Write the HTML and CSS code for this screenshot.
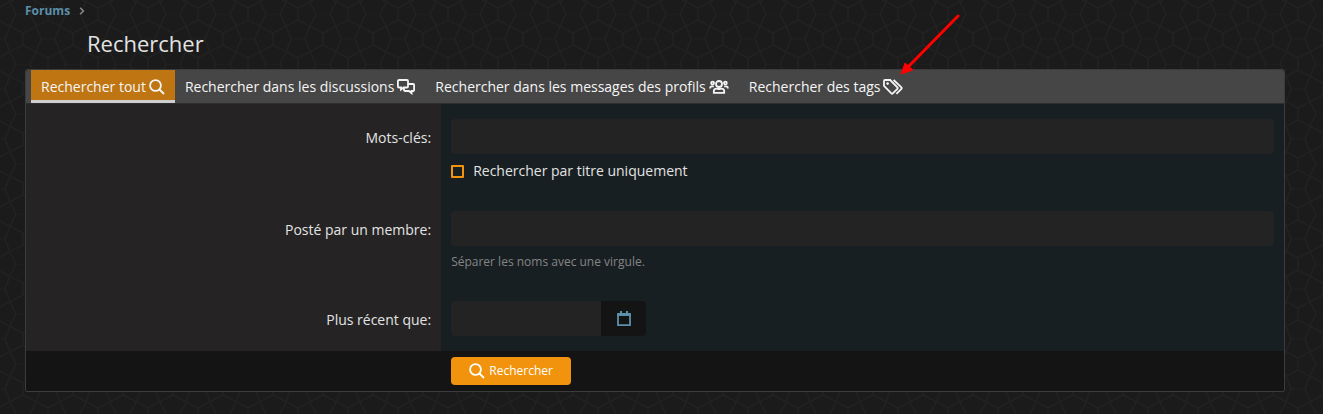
FILE: index.html
```html
<!DOCTYPE html>
<html lang="fr">
<head>
    <meta charset="UTF-8">
    <meta name="viewport" content="width=device-width, initial-scale=1.0">
    <title>Rechercher</title>
    <link rel="stylesheet" href="styles.css">
</head>
<body>
    <div class="page">
        <nav class="breadcrumbs">
            <a href="#">Forums</a>
            <svg class="chevron" viewBox="0 0 6 8" aria-hidden="true"><path d="M1.2 0.8 4.4 4 1.2 7.2"/></svg>
        </nav>

        <h1>Rechercher</h1>

        <form class="block" action="#">
            <nav class="tabs">
                <a class="tab tab-active" href="#">Rechercher tout
                    <svg class="icon" viewBox="0 0 16 16" aria-hidden="true"><circle cx="6.5" cy="6.5" r="5.4"/><path d="M10.5 10.5 15 15"/></svg>
                </a>
                <a class="tab" href="#">Rechercher dans les discussions
                    <svg class="icon icon-wide" viewBox="0 0 18 16" aria-hidden="true"><path d="M1.9 1H10a1 1 0 0 1 1 1V7.5a1 1 0 0 1-1 1H6.5L4 10.6V8.5H1.9a1 1 0 0 1-1-1V2a1 1 0 0 1 1-1Z"/><path d="M11 5H16.1a1 1 0 0 1 1 1V11a1 1 0 0 1-1 1H14.6V14.2L12 12H8a1 1 0 0 1-1-1V8.5"/></svg>
                </a>
                <a class="tab" href="#">Rechercher dans les messages des profils
                    <svg class="icon icon-group" viewBox="0 0 20 16" aria-hidden="true"><circle cx="10" cy="5" r="3"/><circle cx="3.6" cy="4" r="1.4"/><circle cx="16.4" cy="4" r="1.4"/><path d="M4.8 13.8V12.2C4.8 10.6 6 9.6 7.5 9.6 8.6 9.6 9 10 10 10S11.4 9.6 12.5 9.6C14 9.6 15.2 10.6 15.2 12.2V13.8Z"/><path d="M1.2 9.6V9C1.2 7.8 1.8 7.4 2.8 7.4H4.8M18.8 9.6V9C18.8 7.8 18.2 7.4 17.2 7.4H15.2"/></svg>
                </a>
                <a class="tab" href="#">Rechercher des tags
                    <svg class="icon icon-group" viewBox="0 0 20 16" aria-hidden="true"><path d="M1 2V7L8.4 14.4a1 1 0 0 0 1.4 0L14.4 9.8a1 1 0 0 0 0-1.4L7.2 1H2a1 1 0 0 0-1 1Z"/><path d="M10.6 1 18.4 8.4a1 1 0 0 1 0 1.4L13.4 14.8"/><circle class="dot" cx="4.6" cy="4.6" r="1.3"/></svg>
                </a>
            </nav>

            <div class="row">
                <div class="row-label"><label for="keywords">Mots-clés:</label></div>
                <div class="row-field">
                    <input class="input" type="text" id="keywords">
                    <label class="check"><input type="checkbox">Rechercher par titre uniquement</label>
                </div>
            </div>

            <div class="row">
                <div class="row-label"><label for="member">Posté par un membre:</label></div>
                <div class="row-field">
                    <input class="input" type="text" id="member">
                    <p class="hint">Séparer les noms avec une virgule.</p>
                </div>
            </div>

            <div class="row">
                <div class="row-label"><label for="newer">Plus récent que:</label></div>
                <div class="row-field">
                    <div class="date">
                        <input class="input" type="text" id="newer">
                        <button class="date-button" type="button" aria-label="Calendrier">
                            <svg viewBox="0 0 14 16" aria-hidden="true"><path class="line" d="M1 3.5H13V14.2H1Z"/><path class="fill" d="M0 3a1 1 0 0 1 1-1H3V0H5V2H9V0H11V2H13a1 1 0 0 1 1 1V5H0Z"/></svg>
                        </button>
                    </div>
                </div>
            </div>

            <div class="footer">
                <button class="submit" type="submit">
                    <svg class="icon" viewBox="0 0 16 16" aria-hidden="true"><circle cx="6.5" cy="6.5" r="5.4"/><path d="M10.5 10.5 15 15"/></svg>
                    Rechercher
                </button>
            </div>
        </form>

        <!-- Arrow pointing at the tags tab -->
        <svg class="arrow" viewBox="0 0 60 62" aria-hidden="true"><path class="shaft" d="M58 2 9 52"/><path class="head" d="M1 60 5 49 13 56Z"/></svg>
    </div>
</body>
</html>
```
FILE: styles.css
```css
:root {
    --text-color: #e3e3e3;
    --link-color: #5c8fa9;
    --accent-color: #f2930d;
    --border-color: #3c3c3c;
    --input-color: #232323;
}

* {
    box-sizing: border-box;
}

body {
    margin: 0;
    font-family: 'Segoe UI', 'Open Sans', 'Noto Sans', sans-serif;
    font-size: 14px;
    line-height: 20px;
    color: var(--text-color);
    background: #1b1b1b url("data:image/svg+xml,%3Csvg xmlns='http://www.w3.org/2000/svg' width='50' height='50'%3E%3Cpath fill='none' stroke='%23222222' stroke-width='1.2' d='M0 0V6L25 19L50 6V0M0 50V44L25 31L50 44V50M25 19V31M18 0H32M0 25H7M43 25H50M18 0L12 12L7 25L12 38L18 50M32 0L38 12L43 25L38 38L32 50'/%3E%3C/svg%3E") -2px 14px;
}

.page {
    position: relative;
    padding: 0 38px 20px 25px;
}

/* Breadcrumbs and title */
.breadcrumbs {
    display: flex;
    align-items: center;
    gap: 9px;
    padding-top: 1px;
    font-size: 12px;
    font-weight: bold;
}

.breadcrumbs a {
    color: var(--link-color);
    text-decoration: none;
}

.chevron {
    width: 6px;
    height: 8px;
    fill: none;
    stroke: #8c8c8c;
    stroke-width: 1.5;
}

h1 {
    margin: 6px 0 9px;
    padding-left: 62px;
    font-size: 22px;
    font-weight: normal;
    line-height: 33px;
}

/* Search block */
.block {
    border: 1px solid var(--border-color);
    border-radius: 2px;
    background: #141414;
}

.tabs {
    display: flex;
    padding: 0 5px;
    border-bottom: 1px solid #2e2e2e;
    border-radius: 2px 2px 0 0;
    background: #464646;
}

.tab {
    display: flex;
    align-items: center;
    gap: 3px;
    height: 33px;
    padding: 3px 10px 0;
    border-bottom: 3px solid transparent;
    color: #f5f5f5;
    text-decoration: none;
    white-space: nowrap;
}

.tab-active {
    border-bottom-color: #cfcfcf;
    background: #be7512;
}

.icon {
    width: 16px;
    height: 16px;
    flex: none;
    fill: none;
    stroke: currentColor;
    stroke-width: 1.8;
}

.icon-wide {
    width: 18px;
}

.icon-group {
    width: 20px;
}

.dot {
    fill: currentColor;
    stroke: none;
}

/* Form rows */
.row {
    display: flex;
    background: #181f22;
}

.row-label {
    width: 33%;
    padding: 24px 10px 10px;
    background: #252323;
    text-align: right;
}

.row-field {
    flex: 1;
    padding: 15px 10px;
}

.input {
    display: block;
    width: 100%;
    height: 35px;
    padding: 5px;
    border: none;
    border-radius: 4px;
    background: var(--input-color);
    color: var(--text-color);
    font: inherit;
}

.check {
    display: flex;
    align-items: center;
    gap: 9px;
    padding-top: 7px;
}

.check input {
    width: 13px;
    height: 13px;
    margin: 0;
    border: 2px solid var(--accent-color);
    border-radius: 1px;
    appearance: none;
}

.check input:checked {
    background: var(--accent-color);
}

.hint {
    margin: 7px 0 0;
    color: #858585;
    font-size: 12px;
    line-height: 18px;
}

.date {
    display: flex;
    width: 195px;
}

.date .input {
    flex: 1;
    min-width: 0;
    border-radius: 4px 0 0 4px;
}

.date-button {
    display: flex;
    align-items: center;
    justify-content: center;
    width: 45px;
    padding: 0;
    border: none;
    border-radius: 0 4px 4px 0;
    background: #141414;
    color: var(--link-color);
}

.date-button svg {
    width: 14px;
    height: 16px;
}

.date-button .line {
    fill: none;
    stroke: currentColor;
    stroke-width: 1.8;
}

.date-button .fill {
    fill: currentColor;
}

/* Submit */
.footer {
    padding: 6px 10px 6px calc(33% + 10px);
}

.submit {
    display: flex;
    align-items: center;
    justify-content: center;
    gap: 4px;
    width: 120px;
    height: 28px;
    padding: 0;
    border: none;
    border-radius: 4px;
    background: var(--accent-color);
    color: #fff;
    font: inherit;
    font-size: 12px;
    cursor: pointer;
}

.arrow {
    position: absolute;
    top: 14px;
    left: 900px;
    width: 60px;
    height: 62px;
}

.arrow .shaft {
    fill: none;
    stroke: #f00;
    stroke-width: 3;
    stroke-linecap: round;
}

.arrow .head {
    fill: #f00;
    stroke: #f00;
    stroke-linejoin: round;
}
```
